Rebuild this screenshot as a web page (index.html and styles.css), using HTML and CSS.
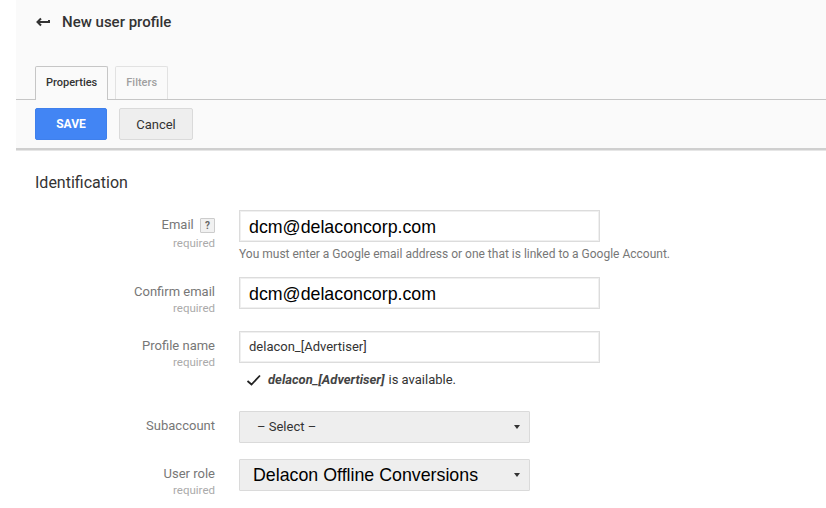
FILE: index.html
```html
<!doctype html>
<html lang="en">
<head>
	<meta charset="utf-8" />
	<title>New user profile</title>
	<link rel="stylesheet" href="styles.css">
</head>
<body>
	<!-- header: title, tabs, toolbar -->
	<div class="head">
		<div class="title-row">
			<svg class="back" width="16" height="12" viewBox="0 0 16 12">
				<path d="M5 2.5 L1.5 6 L5 9.5" fill="none" stroke="#333" stroke-width="2" />
				<path d="M2 6 H13 V4" fill="none" stroke="#333" stroke-width="2" />
			</svg>
			<h1>New user profile</h1>
		</div>
		<ul class="tabs">
			<li class="active">Properties</li>
			<li>Filters</li>
		</ul>
		<div class="toolbar">
			<button class="btn btn-save">SAVE</button>
			<button class="btn btn-cancel">Cancel</button>
		</div>
	</div>

	<!-- form -->
	<div class="form">
		<h2>Identification</h2>

		<div class="row row-email">
			<div class="label">
				<div>Email <span class="help">?</span></div>
				<div class="req">required</div>
			</div>
			<div class="field">
				<div class="input big">dcm@delaconcorp.com</div>
				<div class="hint">You must enter a Google email address or one that is linked to a Google Account.</div>
			</div>
		</div>

		<div class="row row-confirm">
			<div class="label">
				<div>Confirm email</div>
				<div class="req">required</div>
			</div>
			<div class="field">
				<div class="input big">dcm@delaconcorp.com</div>
			</div>
		</div>

		<div class="row row-profile">
			<div class="label">
				<div>Profile name</div>
				<div class="req">required</div>
			</div>
			<div class="field">
				<div class="input">delacon_[Advertiser]</div>
				<div class="ok">
					<svg width="16" height="12" viewBox="0 0 16 12">
						<path d="M1.5 7 L5.5 10.5 L14 1.5" fill="none" stroke="#222" stroke-width="1.8" />
					</svg>
					<em>delacon_[Advertiser]</em>is available.
				</div>
			</div>
		</div>

		<div class="row row-sub">
			<div class="label">
				<div>Subaccount</div>
			</div>
			<div class="field">
				<div class="select">– Select –<span class="caret"></span></div>
			</div>
		</div>

		<div class="row">
			<div class="label">
				<div>User role</div>
				<div class="req">required</div>
			</div>
			<div class="field">
				<div class="select big">Delacon Offline Conversions<span class="caret"></span></div>
			</div>
		</div>
	</div>
</body>
</html>
```

FILE: styles.css
```css
* {
	margin: 0;
	padding: 0;
	box-sizing: border-box;
}
body {
	background: #fff;
	font-family: Roboto, "Liberation Sans", Arial, sans-serif;
	color: #333;
}
ul {
	list-style-type: none;
}
/* header */
.head {
	margin-left: 16px;
	background: #fafafa;
	border-bottom: 2px solid #cfcfcf;
	box-shadow: 0 1px 0 #e6e6e6;
}
.title-row {
	height: 44px;
	display: flex;
	align-items: center;
	padding-left: 20px;
}
.back {
	margin-right: 10px;
}
.title-row h1 {
	font-size: 15px;
	font-weight: 500;
	color: #333;
}
.tabs {
	margin-top: 22px;
	display: flex;
	gap: 7px;
	padding-left: 19px;
	border-bottom: 1px solid #c6c6c6;
}
.tabs li {
	height: 33px;
	line-height: 31px;
	padding: 0 10px;
	font-size: 11px;
	font-weight: 500;
	color: #a0a0a0;
	border: 1px solid #e2e2e2;
	border-bottom: none;
	border-radius: 2px 2px 0 0;
}
.tabs .active {
	color: #333;
	border-color: #c6c6c6;
	background: #fafafa;
	height: 34px;
	margin-bottom: -1px;
}
.toolbar {
	display: flex;
	gap: 12px;
	padding: 8px 19px;
}
.btn {
	height: 32px;
	border-radius: 2px;
	font-family: Roboto, "Liberation Sans", Arial, sans-serif;
}
.btn-save {
	width: 72px;
	background: #4285f4;
	border: 1px solid #3f80ec;
	color: #fff;
	font-size: 12px;
	font-weight: 700;
}
.btn-cancel {
	width: 74px;
	background: #eee;
	border: 1px solid #dadada;
	color: #333;
	font-size: 13px;
}
/* form */
.form {
	padding-left: 35px;
}
.form h2 {
	margin-top: 23px;
	font-size: 16px;
	font-weight: 400;
	line-height: 20px;
	color: #333;
	margin-bottom: 17px;
}
.row {
	display: flex;
	gap: 24px;
}
.row-email {
	margin-bottom: 15px;
}
.row-confirm {
	margin-bottom: 14px;
}
.row-profile {
	margin-bottom: 21px;
}
.row-sub {
	margin-bottom: 16px;
}
.label {
	width: 180px;
	text-align: right;
	padding-top: 6px;
	font-size: 13px;
	line-height: 17px;
	color: #777;
}
.label .req {
	font-size: 11.5px;
	color: #aaa;
}
.row-email .req {
	margin-top: 2px;
}
.help {
	display: inline-block;
	width: 15px;
	height: 15px;
	margin-left: 3px;
	line-height: 13px;
	text-align: center;
	font-size: 10px;
	font-weight: 700;
	color: #666;
	background: #f1f1f1;
	border: 1px solid #ccc;
	border-radius: 1px;
	vertical-align: 0;
}
.input {
	width: 361px;
	height: 32px;
	line-height: 30px;
	padding-left: 9px;
	border: 1px solid #dcdcdc;
	box-shadow: inset 0 0 0 1px #f0f0f0;
	background: #fff;
	font-size: 13px;
	color: #333;
}
.input.big {
	font-family: "Liberation Sans", Arial, sans-serif;
	font-size: 17.8px;
	line-height: 33px;
	color: #000;
}
.hint {
	margin-top: 4px;
	font-size: 12px;
	line-height: 16px;
	color: #777;
}
.ok {
	margin-top: 7px;
	padding-left: 7px;
	font-size: 13px;
	line-height: 20px;
	color: #333;
	display: flex;
	align-items: center;
}
.ok svg {
	margin-right: 6px;
}
.ok em {
	font-weight: 700;
	color: #444;
	margin-right: 4px;
}
.select {
	position: relative;
	width: 291px;
	height: 32px;
	line-height: 30px;
	padding-left: 17px;
	background: #eee;
	border: 1px solid #dadada;
	border-radius: 1px;
	font-size: 13px;
	color: #333;
}
.select.big {
	padding-left: 13px;
	font-family: "Liberation Sans", Arial, sans-serif;
	font-size: 17.8px;
	color: #000;
}
.caret {
	position: absolute;
	right: 9px;
	top: 13px;
	width: 0;
	height: 0;
	border-left: 3.5px solid transparent;
	border-right: 3.5px solid transparent;
	border-top: 4px solid #333;
}
```
